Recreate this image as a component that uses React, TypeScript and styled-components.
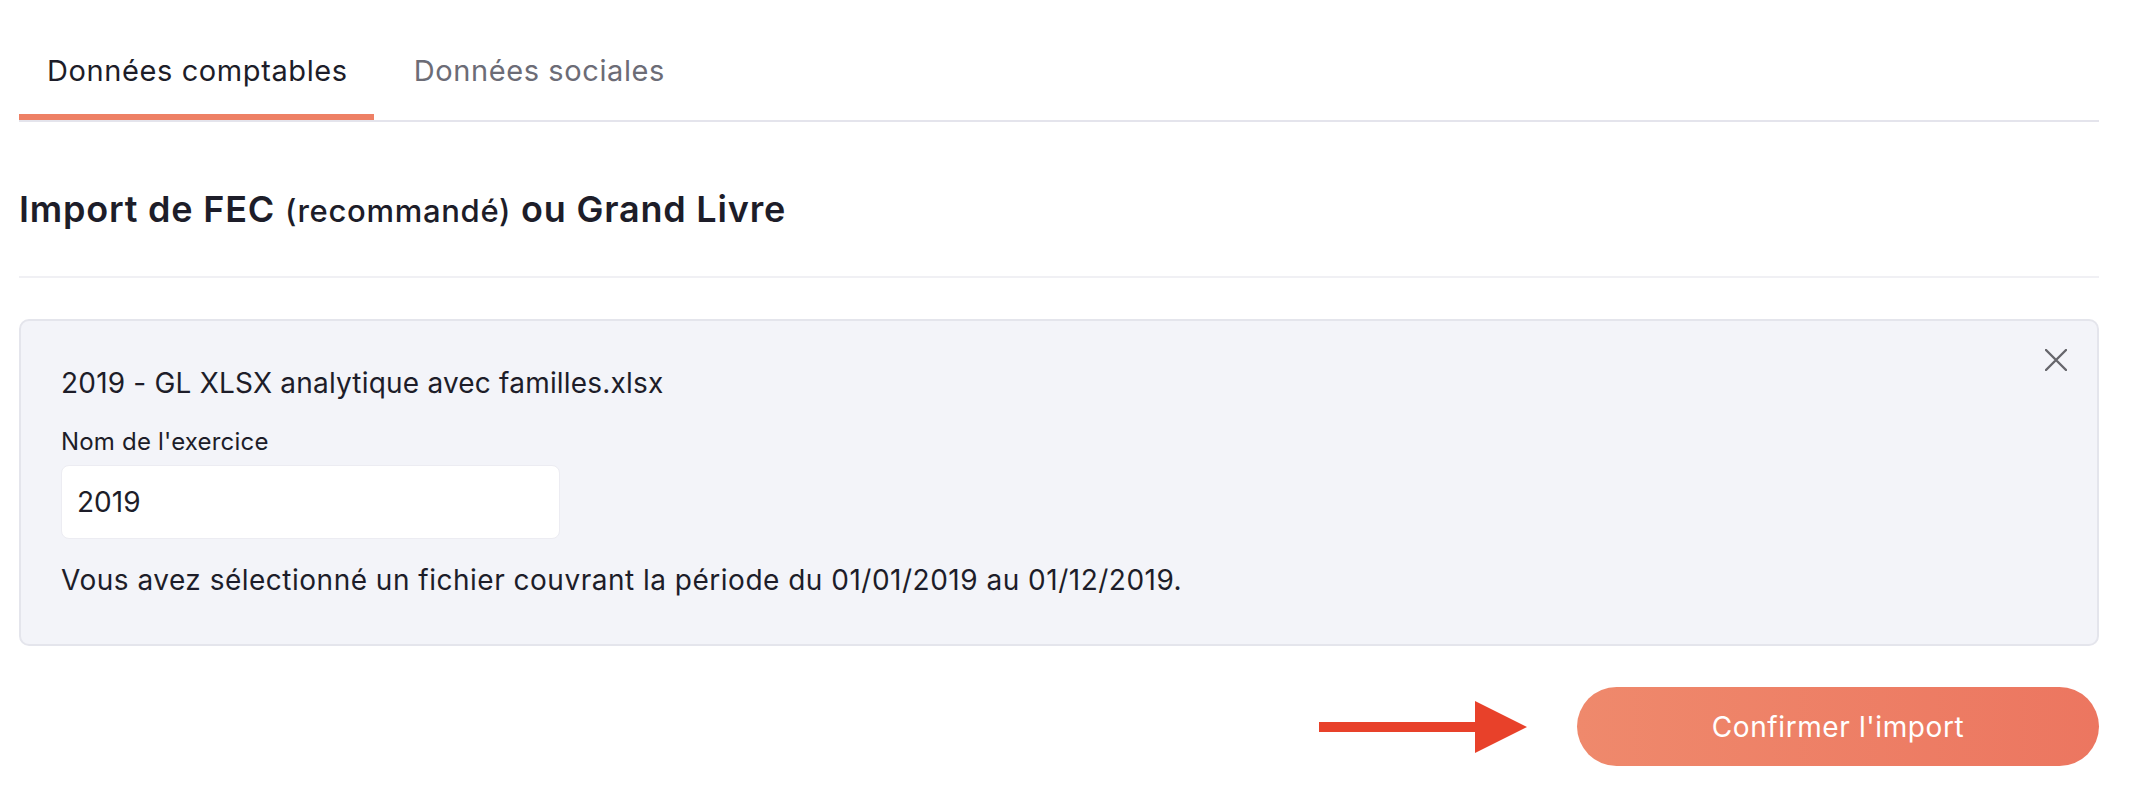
import React from "react";
import styled, { createGlobalStyle } from "styled-components";

const GlobalStyle = createGlobalStyle`
  html, body { margin: 0; padding: 0; background: #ffffff; }
  body { font-family: "Inter", "Open Sans", sans-serif; color: #1d1d29; }
  * { box-sizing: border-box; }
`;

const Page = styled.div`
  padding: 0 31px 0 19px;
  display: flex;
  flex-direction: column;
`;

const TabBar = styled.div`
  display: flex;
  gap: 12px;
  padding-top: 49px;
  border-bottom: 2px solid #e4e4ec;
`;

const Tab = styled.div<{ $active?: boolean }>`
  padding: 0 26px 21px 28px;
  font-size: 29px;
  letter-spacing: 0.6px;
  line-height: 44px;
  color: ${(p) => (p.$active ? "#1d1d29" : "#6c6c76")};
  border-bottom: 6px solid ${(p) => (p.$active ? "#ee8065" : "transparent")};
  white-space: nowrap;
`;

const Heading = styled.h2`
  margin: 0;
  padding: 66px 0 44px;
  font-size: 36px;
  line-height: 42px;
  font-weight: 600;
  letter-spacing: 0.8px;
  color: #1d1d29;
  border-bottom: 2px solid #f0f0f4;
`;

const Soft = styled.span`
  font-size: 31px;
  font-weight: 500;
  letter-spacing: 0.7px;
`;

const Card = styled.div`
  position: relative;
  margin-top: 41px;
  background: #f3f4f9;
  border: 2px solid #e4e5ec;
  border-radius: 10px;
  padding: 42px 40px 44px;
  display: flex;
  flex-direction: column;
`;

const CloseButton = styled.button`
  position: absolute;
  top: 27px;
  right: 29px;
  width: 24px;
  height: 24px;
  padding: 0;
  border: 0;
  background: transparent;
  display: flex;
  align-items: center;
  justify-content: center;
  color: #66666c;
`;

const FileName = styled.div`
  font-size: 28px;
  line-height: 40px;
  letter-spacing: 0.2px;
`;

const Label = styled.label`
  margin-top: 24px;
  font-size: 24px;
  line-height: 30px;
  letter-spacing: 0.2px;
`;

const Input = styled.input`
  margin-top: 8px;
  width: 499px;
  height: 74px;
  background: #ffffff;
  border: 1px solid #ececf2;
  border-radius: 8px;
  padding: 0 15px;
  font-family: inherit;
  font-size: 28px;
  color: #1d1d29;
  outline: none;
`;

const Info = styled.p`
  margin: 21px 0 0;
  font-size: 28px;
  line-height: 40px;
  letter-spacing: 0.5px;
`;

const Footer = styled.div`
  margin-top: 41px;
  display: flex;
  justify-content: flex-end;
  align-items: center;
  gap: 48px;
`;

const ConfirmButton = styled.button`
  width: 522px;
  height: 79px;
  border: 0;
  border-radius: 40px;
  background: linear-gradient(90deg, #ef896c 0%, #ec7660 100%);
  color: #ffffff;
  font-family: inherit;
  font-size: 28px;
  letter-spacing: 0.6px;
  cursor: pointer;
`;

const Arrow = () => (
  <svg width="210" height="52" viewBox="0 0 210 52" aria-hidden="true">
    <rect x="0" y="21" width="160" height="10" fill="#e8412a" />
    <polygon points="156,0 208,26 156,52" fill="#e8412a" />
  </svg>
);

const CloseIcon = () => (
  <svg width="22" height="22" viewBox="0 0 22 22" aria-hidden="true">
    <path d="M1 1 L21 21 M21 1 L1 21" stroke="currentColor" strokeWidth="2.4" strokeLinecap="round" />
  </svg>
);

export default function App() {
  return (
    <>
      <GlobalStyle />
      <Page>
        <TabBar>
          <Tab $active>Données comptables</Tab>
          <Tab>Données sociales</Tab>
        </TabBar>
        <Heading>
          Import de FEC <Soft>(recommandé)</Soft> ou Grand Livre
        </Heading>
        <Card>
          <CloseButton aria-label="Fermer">
            <CloseIcon />
          </CloseButton>
          <FileName>2019 - GL XLSX analytique avec familles.xlsx</FileName>
          <Label>Nom de l'exercice</Label>
          <Input defaultValue="2019" />
          <Info>
            Vous avez sélectionné un fichier couvrant la période du 01/01/2019 au 01/12/2019.
          </Info>
        </Card>
        <Footer>
          <Arrow />
          <ConfirmButton>Confirmer l'import</ConfirmButton>
        </Footer>
      </Page>
    </>
  );
}
